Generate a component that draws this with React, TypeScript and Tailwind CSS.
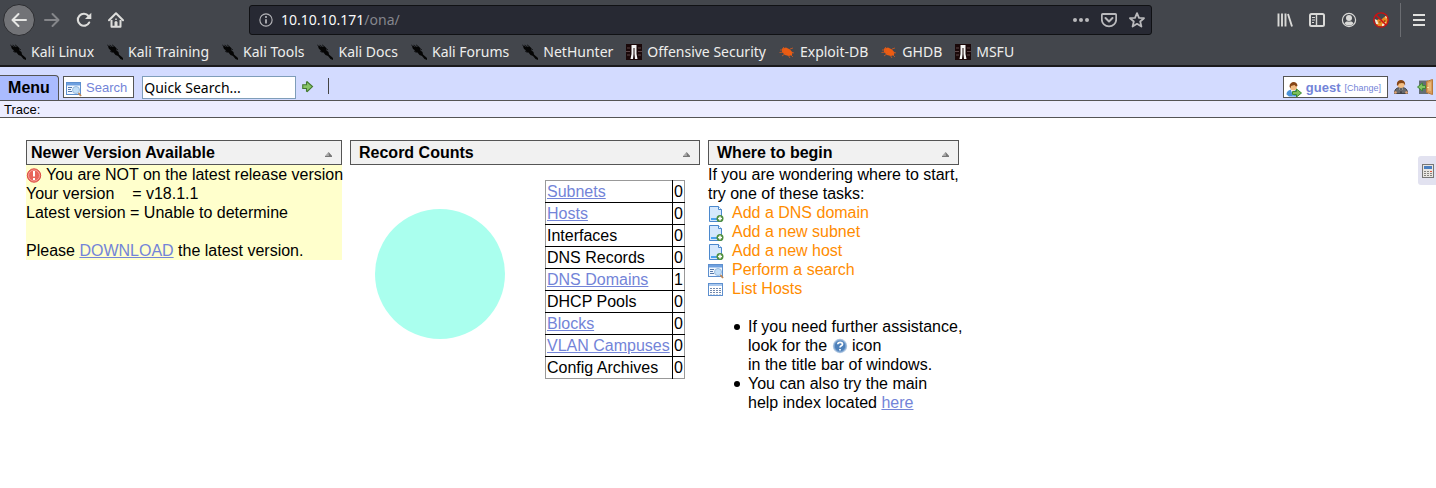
import type { ReactNode } from "react";

type IconProps = { className?: string };

function Svg({ children, className = "size-4" }: { children: ReactNode; className?: string }) {
  return (
    <svg viewBox="0 0 16 16" className={`${className} shrink-0`} fill="none" aria-hidden="true">
      {children}
    </svg>
  );
}

const BackIcon = () => (
  <Svg><path d="M15 8H2M7.500 2 1.500 8l6 6" stroke="#e6e6e4" strokeWidth="2" strokeLinecap="round" strokeLinejoin="round" /></Svg>
);
const ForwardIcon = () => (
  <Svg><path d="M1 8h13M8.500 2l6 6-6 6" stroke="#85868a" strokeWidth="2" strokeLinecap="round" strokeLinejoin="round" /></Svg>
);
const ReloadIcon = () => (
  <Svg>
    <path d="M13.200 10.500A6 6 0 1 1 12.500 4" stroke="#dddddb" strokeWidth="2.100" strokeLinecap="round" />
    <path d="M15.300 0.800v6.200H9z" fill="#dddddb" />
  </Svg>
);
const HomeIcon = () => (
  <Svg>
    <path d="M1 8.300 8 1.300l7 7" stroke="#dddddb" strokeWidth="2" strokeLinecap="round" strokeLinejoin="round" />
    <path d="M3.500 8v6.800h9V8" stroke="#dddddb" strokeWidth="2" strokeLinejoin="round" />
    <path d="M6.500 10.500a1.500 1.500 0 0 1 3 0V15h-3z" fill="#dddddb" />
    <path d="M8 6.500v1.500" stroke="#dddddb" strokeWidth="1.500" />
  </Svg>
);
const InfoIcon = () => (
  <Svg className="size-[14px]">
    <circle cx="8" cy="8" r="7" stroke="#b4b4b8" strokeWidth="1.300" />
    <path d="M8 7v5" stroke="#c8c8cc" strokeWidth="1.800" />
    <circle cx="8" cy="4.500" r="1.100" fill="#c8c8cc" />
  </Svg>
);
const DotsIcon = () => (
  <Svg>
    <circle cx="2" cy="8" r="2" fill="#b9b9bc" />
    <circle cx="8" cy="8" r="2" fill="#b9b9bc" />
    <circle cx="14" cy="8" r="2" fill="#b9b9bc" />
  </Svg>
);
const PocketIcon = () => (
  <Svg>
    <path d="M2 2h12a1.200 1.200 0 0 1 1.200 1.200V7.500a7.200 6.800 0 0 1-14.400 0V3.200A1.200 1.200 0 0 1 2 2z" stroke="#b9b9bc" strokeWidth="1.800" />
    <path d="m4.500 6 3.500 3.500L11.500 6" stroke="#b9b9bc" strokeWidth="2" strokeLinecap="round" strokeLinejoin="round" />
  </Svg>
);
const StarIcon = () => (
  <Svg><path d="m8 1.200 2 4.600 5 .4-3.800 3.300 1.200 5L8 11.800l-4.400 2.700 1.200-5L1 6.200l5-.4z" stroke="#b9b9bc" strokeWidth="1.800" strokeLinejoin="round" /></Svg>
);
const LibraryIcon = () => (
  <Svg>
    <path d="M1.500 1.500v13M5 1.500v13M8.500 1.500v13M11 2l4 12.500" stroke="#d9d9d7" strokeWidth="1.900" />
  </Svg>
);
const SidebarIcon = () => (
  <Svg>
    <rect x="1" y="2" width="14" height="12" rx="1.500" stroke="#d9d9d7" strokeWidth="2" />
    <path d="M7.500 2v12" stroke="#d9d9d7" strokeWidth="1.400" />
    <path d="M3 5.500h3M3 8h3M3 10.500h2" stroke="#d9d9d7" strokeWidth="1" />
  </Svg>
);
const AccountIcon = () => (
  <Svg>
    <circle cx="8" cy="8" r="6.600" stroke="#d9d9d7" strokeWidth="1.200" />
    <circle cx="8" cy="6" r="3" fill="#d9d9d7" />
    <path d="M3.500 11.500C4.500 9.500 6 9.200 8 9.800c2-.6 3.500-.3 4.500 1.700C11 13.200 9.500 13.600 8 13.600s-3-.4-4.500-2.100z" fill="#d9d9d7" />
  </Svg>
);
const BlockedFoxIcon = () => (
  <Svg>
    <path d="M3 8.500 6 7l2 1 2-2 4-3 1 5-1.500 4.500L9 14.500l-4-.5-2-2z" fill="#e98a21" />
    <path d="M1.500 7 4 8l1.500 4L3 12zM9 12l4-2-1 3-3 1.500zM12 4l2 1-1 2z" fill="#f5e6d0" />
    <path d="M6 9.500h2l-1 1.500zM10.500 9l2-1-.5 2z" fill="#5d2c10" />
    <circle cx="8" cy="8" r="7.200" stroke="#cf1010" strokeWidth="1.300" />
    <path d="m3 3 10 10" stroke="#cf1010" strokeWidth="1.500" />
  </Svg>
);
const HamburgerIcon = () => (
  <Svg><path d="M2 3h12M2 8h12M2 13h12" stroke="#e0e0de" strokeWidth="2" /></Svg>
);
const KaliIcon = () => (
  <Svg>
    <path d="M1 2.500 2.500 1.500 4 3l2.500-.5L9 3.500l.5 3 2 1.500.5 2.500 4 3.500v2l-2.500-1-2.500-3-2.500-1-2-2.500-2-.5L3.500 6 2 5z" fill="#050505" />
    <path d="M0 .5 2.500 3M5 .8 8 3M3 .8 5 3M3 7l2.500 1.500M9 4.500l2 1.500" stroke="#101113" strokeWidth=".9" />
  </Svg>
);
const OffsecIcon = () => (
  <Svg>
    <path d="M0 0h16v16H0z" fill="#1a0809" />
    <path d="M1 4h3M0 7.500h4M1 11h3M12 4h3M12 7.500h4M12 11h3" stroke="#5c4648" strokeWidth="1.200" />
    <path d="M5.500 1h5v9l1 5h-2.500l-.5-5V4h-1v6L7 15H4.500l1-5z" fill="#f4f4f4" />
  </Svg>
);
const BugIcon = () => (
  <Svg>
    <path d="M3 4.500 7 3.500l4 2 2.500 3-.5 2.500-3 1-4-1-3-3z" fill="#ed5c12" />
    <path d="M1 6h4M.5 8.500 5 8M3 12l4-3M11 5l3-1M12 8l3 1M9 11l2 3M12 11l2 2M4 3l2 2" stroke="#d65a20" strokeWidth=".8" />
  </Svg>
);
const SearchWindowIcon = ({ className }: IconProps) => (
  <Svg className={className}>
    <rect x=".5" y="1.500" width="14" height="12" fill="#f2f8ff" stroke="#5d8fce" />
    <path d="M1 2h13v2.500H1z" fill="#6ea0df" />
    <path d="M2 6.500h4M2 8.500h3M2 10.500h4" stroke="#5679aa" />
    <rect x="7" y="6" width="6" height="3" fill="#c4dcf5" />
    <circle cx="10" cy="9" r="3.500" fill="#c1def8" stroke="#9bbbdc" />
    <path d="m12.500 12 2.500 3" stroke="#bd8654" strokeWidth="1.800" />
  </Svg>
);
const ListIcon = ({ className }: IconProps) => (
  <Svg className={className}>
    <rect x=".5" y="1.500" width="14" height="12" fill="#fff" stroke="#5d8fce" />
    <path d="M1 2h13v2H1z" fill="#a9c8ee" />
    <path d="M2 6.500h2M5 6.500h2M8 6.500h2M11 6.500h2M2 8.500h2M5 8.500h2M8 8.500h2M11 8.500h2M2 10.500h2M5 10.500h2M8 10.500h2M11 10.500h2" stroke="#7289ad" />
    <path d="M2 12.500h2M5 12.500h2M8 12.500h2M11 12.500h2" stroke="#c3cfdf" />
  </Svg>
);
const PageAddIcon = ({ className }: IconProps) => (
  <Svg className={className}>
    <path d="M1.500.5h9l3 3v12h-12z" fill="#d5e8fd" stroke="#4b88cd" />
    <path d="M10.500.5v3h3" fill="#fff" stroke="#4b88cd" />
    <path d="M3 12h6v2H3z" fill="#4aa3ee" />
    <circle cx="12" cy="12.500" r="3.500" fill="#4f8f3d" />
    <path d="M12 10.500v4M10 12.500h4" stroke="#fff" strokeWidth="1.600" />
  </Svg>
);
const AlertIcon = ({ className }: IconProps) => (
  <Svg className={className}>
    <circle cx="8" cy="8.500" r="6.700" fill="#e8655a" stroke="#dc4d46" />
    <circle cx="8" cy="8.500" r="5.500" stroke="#f7a199" />
    <path d="M8 4v5.500M8 11v2" stroke="#fff" strokeWidth="2" />
  </Svg>
);
const HelpIcon = ({ className }: IconProps) => (
  <Svg className={className}>
    <circle cx="8" cy="8" r="7.200" fill="#a9c2df" />
    <circle cx="8" cy="8" r="5.700" fill="#4d80ba" stroke="#7ba3d0" />
    <path d="M5.800 6.200C5.800 3.600 10.500 3.700 10.500 6.200 10.500 7.800 8 7.800 8 9.500M8 11v1.600" stroke="#fff" strokeWidth="1.700" />
  </Svg>
);
const GoIcon = () => (
  <Svg className="size-3">
    <path d="M1 5h5V1.500l.8-.5L14 7.500 7 14l-1-.5V10H1z" fill="#87c466" stroke="#447a31" strokeWidth="1.500" />
  </Svg>
);
const UserGoIcon = () => (
  <Svg>
    <path d="M.5 13.500C.5 10 3 8.500 7 8.500s5 2 5 5l-2 2H3z" fill="#4b93d8" />
    <path d="M5 9h4l-2 6z" fill="#fff" />
    <circle cx="7.500" cy="6" r="3.400" fill="#f3bd83" />
    <path d="M3.500 5.500c0-6 8-6 8-.5L10 5.500 8.500 4 5 5 4.500 7.500z" fill="#864516" />
    <path d="M6.500 10.500h4V8l5 4-5 4v-2.500h-4z" fill="#7cbf5a" stroke="#3c8a30" />
  </Svg>
);
const AdminIcon = () => (
  <Svg>
    <path d="M1.500 14.500c0-4 1.500-6 6.500-6s6.500 2 6.500 6z" fill="#67696d" stroke="#424347" />
    <path d="m6 9 2 2 2-2-2 4z" fill="#fff" />
    <path d="M8 10v4" stroke="#303136" strokeWidth="1.300" />
    <circle cx="8" cy="5.500" r="3.500" fill="#f3bd83" />
    <path d="M4 6.500C2.500-.8 13.500-.8 12 6.500l-1-2-2-.5-3 .5-1 2z" fill="#864516" />
    <circle cx="2.500" cy="13.500" r="1.300" fill="#e4a46f" />
    <circle cx="13.500" cy="13.500" r="1.300" fill="#e4a46f" />
  </Svg>
);
const DoorOutIcon = () => (
  <Svg>
    <path d="M2 1.500h9V15H2z" fill="#656d75" />
    <path d="M9.500 2.500 15.500.5v15l-6-2z" fill="#d99c58" stroke="#b87939" />
    <path d="M11 4l3-1v9l-3-.5z" fill="#e8b879" />
    <path d="M11 8v1" stroke="#fff3ba" strokeWidth="1.500" />
    <path d="M8.500 6.500h-3V4l-5 4 5 4V9.500h3z" fill="#82c264" stroke="#3d8935" />
  </Svg>
);
const CollapseIcon = () => (
  <svg viewBox="0 0 7 5" className="h-[5px] w-[7px]" aria-hidden="true">
    <path d="M3.500 0 7 4H0z" fill="#aaa" />
    <path d="M3.500 0 7 4v1H0V4h4z" fill="#777" />
  </svg>
);
const CalculatorIcon = () => (
  <svg viewBox="0 0 12 14" className="h-[14px] w-3" aria-hidden="true">
    <path d="M0 0h12v14H0z" fill="#777" />
    <path d="M1 1h10v12H1z" fill="#e9e6e2" />
    <path d="M2 2h8v3H2z" fill="#4a7fc0" />
    <path d="M2 7.500h2M5 7.500h2M2 9.500h2M5 9.500h2M8 9.500h2M2 11.500h2M5 11.500h2M8 11.500h2" stroke="#85827f" />
    <path d="M8 7.500h2" stroke="#d95540" />
  </svg>
);

const bookmarks = [
  ["Kali Linux", "kali"],
  ["Kali Training", "kali"],
  ["Kali Tools", "kali"],
  ["Kali Docs", "kali"],
  ["Kali Forums", "kali"],
  ["NetHunter", "kali"],
  ["Offensive Security", "offsec"],
  ["Exploit-DB", "bug"],
  ["GHDB", "bug"],
  ["MSFU", "offsec"],
];

const counts: [string, number, boolean][] = [
  ["Subnets", 0, true],
  ["Hosts", 0, true],
  ["Interfaces", 0, false],
  ["DNS Records", 0, false],
  ["DNS Domains", 1, true],
  ["DHCP Pools", 0, false],
  ["Blocks", 0, true],
  ["VLAN Campuses", 0, true],
  ["Config Archives", 0, false],
];

function ToolButton({ label, children }: { label: string; children: ReactNode }) {
  return (
    <button aria-label={label} className="flex size-8 shrink-0 items-center justify-center">
      {children}
    </button>
  );
}

function Browser() {
  return (
    <header className="border-b-2 border-[#1a1a1c] bg-[#43464c] font-['Noto_Sans',sans-serif]">
      <div className="flex h-10 items-center pl-[3px]">
        <button aria-label="Back" className="mr-px flex size-8 shrink-0 items-center justify-center rounded-full border border-[#2c2d31] bg-[#727377]">
          <BackIcon />
        </button>
        <ToolButton label="Forward"><ForwardIcon /></ToolButton>
        <ToolButton label="Reload"><ReloadIcon /></ToolButton>
        <ToolButton label="Home"><HomeIcon /></ToolButton>
        <div className="mx-[117px] flex h-[30px] min-w-0 flex-1 items-center rounded-[3px] border border-[#101114] bg-[#272933] pl-[9px]">
          <InfoIcon />
          <div className="min-w-0 flex-1 pl-2 text-sm text-[#85868d]">
            <span className="text-[#f9f9fa]">10.10.10.171</span>/ona/
          </div>
          <button aria-label="Page actions" className="flex w-7 justify-center"><DotsIcon /></button>
          <button aria-label="Save to Pocket" className="flex w-7 justify-center"><PocketIcon /></button>
          <button aria-label="Bookmark this page" className="flex w-7 justify-center"><StarIcon /></button>
        </div>
        <ToolButton label="Library"><LibraryIcon /></ToolButton>
        <ToolButton label="Sidebars"><SidebarIcon /></ToolButton>
        <ToolButton label="Account"><AccountIcon /></ToolButton>
        <ToolButton label="Proxy off"><BlockedFoxIcon /></ToolButton>
        <div className="ml-[3px] h-[34px] w-px bg-[#6b6d72]" />
        <div className="flex w-[35px] justify-center"><ToolButton label="Open menu"><HamburgerIcon /></ToolButton></div>
      </div>
      <nav className="flex h-[25px] items-start gap-[13px] overflow-hidden pt-px pl-[10px] text-sm text-[#eeeeec]">
        {bookmarks.map(([name, kind]) => (
          <a key={name} href="#" className="flex shrink-0 items-center gap-[5px] leading-[22px] whitespace-nowrap">
            {kind === "kali" ? <KaliIcon /> : kind === "bug" ? <BugIcon /> : <OffsecIcon />}
            {name}
          </a>
        ))}
      </nav>
    </header>
  );
}

function TopBar() {
  return (
    <div className="flex h-[34px] items-end border-b border-[#555] bg-[#d3dbff]">
      <button className="h-[25px] w-[59px] rounded-tr border-t border-r border-[#555] bg-[#aabbff] text-base leading-5 font-bold">Menu</button>
      <button className="mb-[2px] ml-1 flex h-[22px] items-center gap-1 border border-[#555] bg-white pr-[6px] pl-[2px] text-[13px] text-[#7384d8]">
        <SearchWindowIcon className="mt-1 size-4" />
        Search
      </button>
      <input
        aria-label="Quick search"
        defaultValue="Quick Search..."
        className="mb-px ml-2 h-[23px] w-[154px] border border-[#7f9db9] bg-white px-px font-['Noto_Sans',sans-serif] text-sm outline-none"
      />
      <button aria-label="Go" className="mb-[7px] ml-[6px]"><GoIcon /></button>
      <div className="mb-[6px] ml-[14px] h-4 w-px bg-[#444]" />
      <div className="mr-[3px] ml-auto flex items-center pb-[2px]">
        <button className="flex h-[22px] items-center border border-[#555] bg-white pr-[6px] pl-[2px] text-[#7384d8]">
          <span className="pt-1"><UserGoIcon /></span>
          <span className="ml-1 text-[13px] font-bold">guest</span>
          <span className="mt-[2px] ml-1 text-[9px]">[Change]</span>
        </button>
        <button aria-label="User info" className="ml-[5px]"><AdminIcon /></button>
        <button aria-label="Log out" className="ml-2"><DoorOutIcon /></button>
      </div>
    </div>
  );
}

function Panel({ title, className, headClass, children }: { title: string; className?: string; headClass: string; children: ReactNode }) {
  return (
    <section className={className}>
      <div className={`flex h-[25px] items-center justify-between border border-[#555] bg-[#f1f1f1] pr-[9px] ${headClass}`}>
        <h2 className="font-bold">{title}</h2>
        <button aria-label={`Collapse ${title}`} className="pt-1"><CollapseIcon /></button>
      </div>
      {children}
    </section>
  );
}

function Task({ icon, children }: { icon: ReactNode; children: ReactNode }) {
  return (
    <a href="#" className="flex h-[19px] gap-2 text-[#ff8c00]">
      <span className="pt-[3px]">{icon}</span>
      {children}
    </a>
  );
}

const link = "text-[#7384d8] underline";
const bullet = "before:float-left before:mt-[7px] before:-ml-[14px] before:size-[6px] before:rounded-full before:bg-black before:content-['']";

export default function App() {
  return (
    <div className="min-h-screen bg-white font-['Liberation_Sans',Arial,sans-serif] text-base leading-[19px] text-black">
      <Browser />
      <TopBar />
      <div className="h-[17px] border-b border-[#555] bg-[#ecedff] pl-1 text-[13px] leading-[18px]">Trace:</div>

      <div className="flex">
        <main className="flex flex-1 items-start gap-2 pt-[22px] pl-[26px]">
          <Panel title="Newer Version Available" className="w-[316px] shrink-0" headClass="pl-1">
            <div className="bg-[#ffffcc] whitespace-nowrap">
              <div className="flex gap-1">
                <span className="pt-[2px]"><AlertIcon /></span>
                You are NOT on the latest release version
              </div>
              <div className="whitespace-pre">{"Your version \u00a0\u00a0 = v18.1.1"}</div>
              <div>Latest version = Unable to determine</div>
              <br />
              <div>Please <a href="#" className={link}>DOWNLOAD</a> the latest version.</div>
            </div>
          </Panel>

          <Panel title="Record Counts" className="w-[350px] shrink-0" headClass="pl-2">
            <div className="flex items-start justify-between pt-[15px] pr-[15px] pl-[25px]">
              <svg viewBox="0 0 130 130" className="mt-[29px] size-[130px]" role="img" aria-label="Record distribution">
                <circle cx="65" cy="65" r="65" fill="#aaffee" />
              </svg>
              <table className="w-[140px] border-collapse border border-[#999]">
                <tbody>
                  {counts.map(([name, count, linked]) => (
                    <tr key={name} className="border-b border-black last:border-[#999]">
                      <td className="w-full border-r border-black p-px whitespace-nowrap">
                        {linked ? <a href="#" className={link}>{name}</a> : name}
                      </td>
                      <td className="p-px">{count}</td>
                    </tr>
                  ))}
                </tbody>
              </table>
            </div>
          </Panel>

          <Panel title="Where to begin" className="w-[251px] shrink-0" headClass="pl-2">
            <p>If you are wondering where to start,<br />try one of these tasks:</p>
            <Task icon={<PageAddIcon />}>Add a DNS domain</Task>
            <Task icon={<PageAddIcon />}>Add a new subnet</Task>
            <Task icon={<PageAddIcon />}>Add a new host</Task>
            <Task icon={<SearchWindowIcon />}>Perform a search</Task>
            <Task icon={<ListIcon />}>List Hosts</Task>
            <ul className="mt-[19px] pl-10 whitespace-nowrap">
              <li className={bullet}>
                If you need further assistance,<br />
                look for the <HelpIcon className="inline size-4 align-text-bottom" /> icon<br />
                in the title bar of windows.
              </li>
              <li className={bullet}>
                You can also try the main<br />
                help index located <a href="#" className={link}>here</a>
              </li>
            </ul>
          </Panel>
        </main>
        <aside className="pt-[38px]">
          <button aria-label="Calculator" className="flex h-[29px] w-[18px] items-center justify-center rounded-l-[3px] bg-[#e2e2f0] pl-[2px]">
            <CalculatorIcon />
          </button>
        </aside>
      </div>
    </div>
  );
}
